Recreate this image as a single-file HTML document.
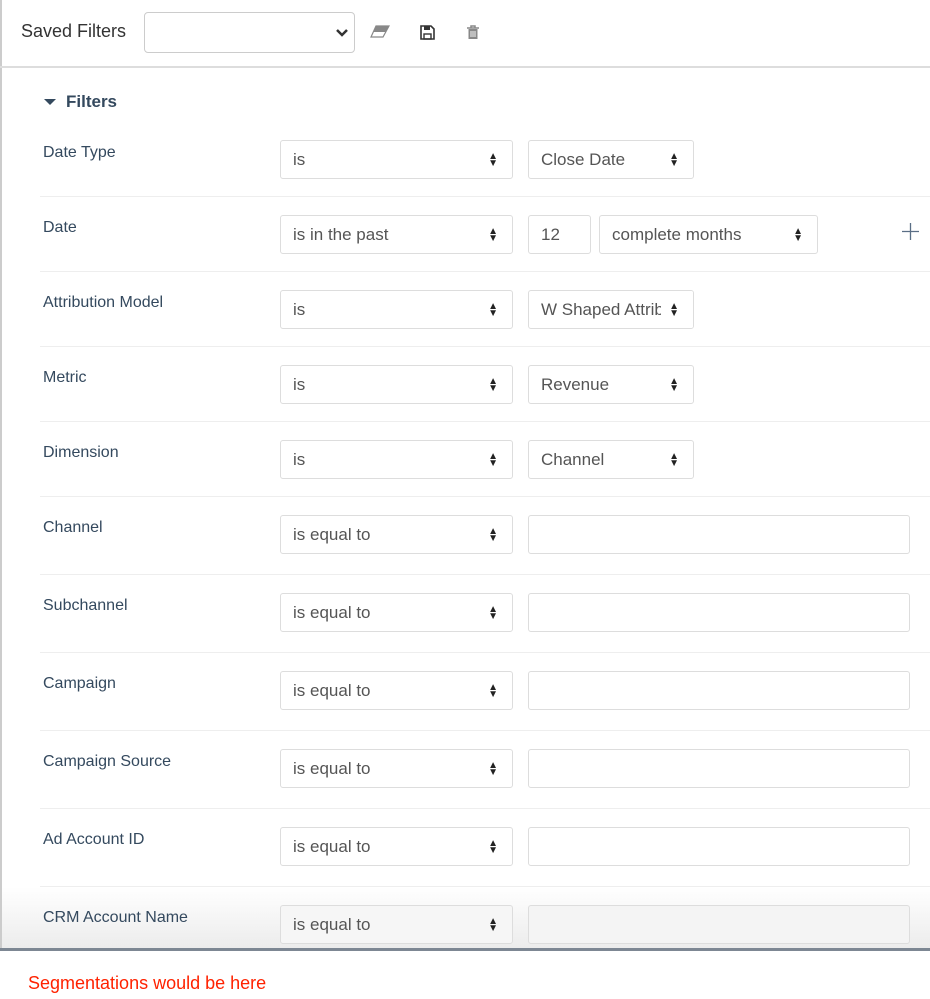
<!DOCTYPE html>
<html><head><style>
*{box-sizing:border-box;margin:0;padding:0}
body{width:930px;height:999px;background:#fff;font-family:"Liberation Sans",sans-serif;position:relative;overflow:hidden}
.a{position:absolute}
.lbl{position:absolute;left:43px;font-size:16px;color:#34495e}
.sel,.inp{position:absolute;height:39px;border:1px solid #ddd;border-radius:3px;background:#fff;font-size:17px;color:#555;padding:9px 0 0 12px;white-space:nowrap;overflow:hidden}
.sel .ar{position:absolute;right:14px;top:12px;font-size:10px;color:#222;line-height:7px}
.sep{position:absolute;left:40px;right:0;height:1px;background:#eee}
</style></head><body>
<div class="a" style="left:0;top:0;width:2px;height:950px;background:#ccc"></div>
<div class="a" style="left:21px;top:21px;font-size:18px;color:#333">Saved Filters</div>
<div class="a" style="left:144px;top:12px;width:211px;height:41px;border:1px solid #ccc;border-radius:4px"></div>
<svg class="a" style="left:335px;top:28px" width="14" height="10" viewBox="0 0 14 10"><path d="M2 2l5 5 5-5" stroke="#333" stroke-width="2.5" fill="none"/></svg>
<svg class="a" style="left:370px;top:25px" width="20" height="14" viewBox="0 0 20 14"><path d="M6 1h13l-6 11H1z" fill="#fff" stroke="#888" stroke-width="1.2"/><path d="M6 1h13l-3 6H3z" fill="#888"/></svg>
<svg class="a" style="left:420px;top:25px" width="15" height="15" viewBox="0 0 15 15"><path d="M1 1h10l3 3v10H1z" fill="none" stroke="#333" stroke-width="1.6"/><rect x="4" y="1" width="6" height="4" fill="#333"/><rect x="4" y="9" width="7" height="5" fill="none" stroke="#333" stroke-width="1.4"/></svg>
<svg class="a" style="left:467px;top:25px" width="12" height="15" viewBox="0 0 12 15"><path d="M0 3h12M4 3V1h4v2" stroke="#888" stroke-width="1.5" fill="none"/><path d="M1.5 4h9v10h-9z" fill="#888"/><path d="M4 6v6M6 6v6M8 6v6" stroke="#fff" stroke-width="0.9"/></svg>
<div class="a" style="left:0;top:66px;width:930px;height:2px;background:#ddd"></div>
<svg class="a" style="left:44px;top:98px" width="12" height="8"><path d="M0 1h12L6 7z" fill="#34495e"/></svg>
<div class="a" style="left:66px;top:92px;font-size:17px;font-weight:bold;color:#34495e">Filters</div>

<div class="a" style="left:2px;top:887px;width:928px;height:61px;background:linear-gradient(#fff,#ececec)"></div>
<div class="a" style="left:0;top:948px;width:930px;height:3px;background:#7d8793"></div>
<div class="a" style="left:28px;top:973px;font-size:18px;color:#ff2200">Segmentations would be here</div>

<div class="lbl" style="top:144px">Date Type</div>
<div class="sel" style="left:280px;top:140px;width:233px">is<span class="ar">▲<br>▼</span></div>
<div class="sel" style="left:528px;top:140px;width:166px">Close Date<span class="ar">▲<br>▼</span></div>
<div class="sep" style="top:196px"></div>

<div class="lbl" style="top:219px">Date</div>
<div class="sel" style="left:280px;top:215px;width:233px">is in the past<span class="ar">▲<br>▼</span></div>
<div class="inp" style="left:528px;top:215px;width:63px">12</div>
<div class="sel" style="left:599px;top:215px;width:219px">complete months<span class="ar">▲<br>▼</span></div>
<svg class="a" style="left:902px;top:223px" width="17" height="17"><path d="M8.5 0v17M0 8.5h17" stroke="#5a6e85" stroke-width="1.3"/></svg>
<div class="sep" style="top:271px"></div>

<div class="lbl" style="top:294px">Attribution Model</div>
<div class="sel" style="left:280px;top:290px;width:233px">is<span class="ar">▲<br>▼</span></div>
<div class="sel" style="left:528px;top:290px;width:166px;padding-right:30px">W Shaped Attribution<span class="ar" style="background:#fff;padding-left:8px;right:0;padding-right:14px;top:0;padding-top:12px;height:37px">▲<br>▼</span></div>
<div class="sep" style="top:346px"></div>

<div class="lbl" style="top:369px">Metric</div>
<div class="sel" style="left:280px;top:365px;width:233px">is<span class="ar">▲<br>▼</span></div>
<div class="sel" style="left:528px;top:365px;width:166px">Revenue<span class="ar">▲<br>▼</span></div>
<div class="sep" style="top:421px"></div>

<div class="lbl" style="top:444px">Dimension</div>
<div class="sel" style="left:280px;top:440px;width:233px">is<span class="ar">▲<br>▼</span></div>
<div class="sel" style="left:528px;top:440px;width:166px">Channel<span class="ar">▲<br>▼</span></div>
<div class="sep" style="top:496px"></div>

<div class="lbl" style="top:519px">Channel</div>
<div class="sel" style="left:280px;top:515px;width:233px">is equal to<span class="ar">▲<br>▼</span></div>
<div class="inp" style="left:528px;top:515px;width:382px"></div>
<div class="sep" style="top:574px"></div>

<div class="lbl" style="top:597px">Subchannel</div>
<div class="sel" style="left:280px;top:593px;width:233px">is equal to<span class="ar">▲<br>▼</span></div>
<div class="inp" style="left:528px;top:593px;width:382px"></div>
<div class="sep" style="top:652px"></div>

<div class="lbl" style="top:675px">Campaign</div>
<div class="sel" style="left:280px;top:671px;width:233px">is equal to<span class="ar">▲<br>▼</span></div>
<div class="inp" style="left:528px;top:671px;width:382px"></div>
<div class="sep" style="top:730px"></div>

<div class="lbl" style="top:753px">Campaign Source</div>
<div class="sel" style="left:280px;top:749px;width:233px">is equal to<span class="ar">▲<br>▼</span></div>
<div class="inp" style="left:528px;top:749px;width:382px"></div>
<div class="sep" style="top:808px"></div>

<div class="lbl" style="top:831px">Ad Account ID</div>
<div class="sel" style="left:280px;top:827px;width:233px">is equal to<span class="ar">▲<br>▼</span></div>
<div class="inp" style="left:528px;top:827px;width:382px"></div>
<div class="sep" style="top:886px"></div>

<div class="lbl" style="top:909px">CRM Account Name</div>
<div class="sel" style="left:280px;top:905px;width:233px;background:#f6f6f6">is equal to<span class="ar">▲<br>▼</span></div>
<div class="inp" style="left:528px;top:905px;width:382px;background:#f4f4f4"></div>
</body></html>
